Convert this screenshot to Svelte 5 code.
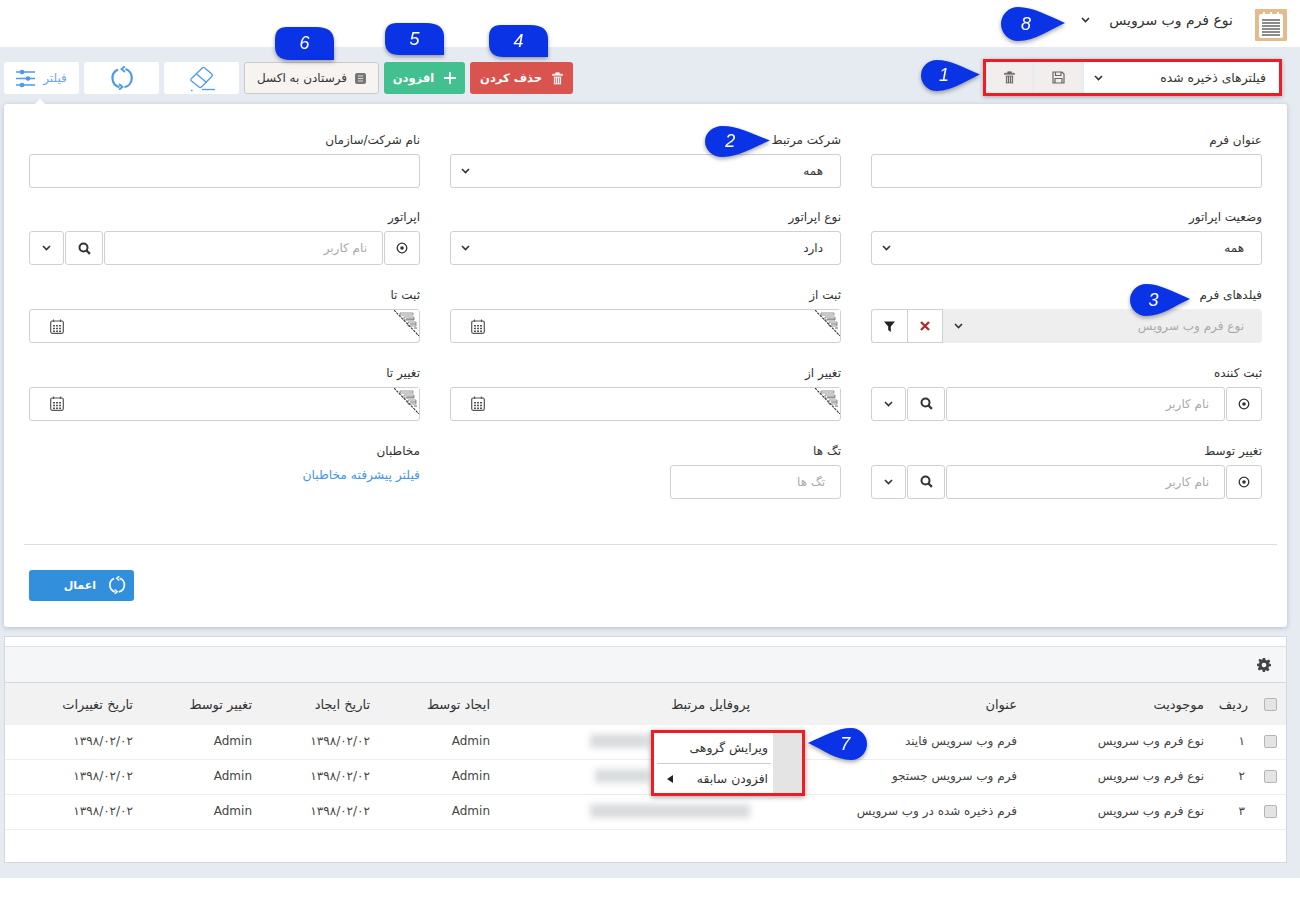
<script>
  const callouts = [
    { n: "1", x: 921, y: 60, w: 59, h: 31, kind: "right" },
    { n: "2", x: 705, y: 126, w: 65, h: 31, kind: "right" },
    { n: "3", x: 1130, y: 284, w: 60, h: 32, kind: "right" },
    { n: "4", x: 489, y: 25, w: 59, h: 32, kind: "box" },
    { n: "5", x: 385, y: 23, w: 59, h: 32, kind: "box" },
    { n: "6", x: 275, y: 27, w: 59, h: 33, kind: "box" },
    { n: "7", x: 808, y: 728, w: 59, h: 32, kind: "left" },
    { n: "8", x: 1001, y: 7, w: 64, h: 34, kind: "right" },
  ];

  const rows = [
    { id: "۱", title: "فرم وب سرویس فایند", blur: 60, blurRight: 100 },
    { id: "۲", title: "فرم وب سرویس جستجو", blur: 55, blurRight: 100 },
    { id: "۳", title: "فرم ذخیره شده در وب سرویس", blur: 160, blurRight: 0 },
  ];
</script>

{#snippet chevron()}
  <svg class="chev" width="9" height="6" viewBox="0 0 9 6"><path d="M1 1l3.500 3.500L8 1" fill="none" stroke="#333" stroke-width="1.600" /></svg>
{/snippet}

{#snippet select(text)}
  <div class="input select"><span>{text}</span>{@render chevron()}</div>
{/snippet}

{#snippet user()}
  <div class="group">
    <button class="addon radio" aria-label="انتخاب">
      <svg width="12" height="12" viewBox="0 0 12 12"><circle cx="6" cy="6" r="4.800" fill="none" stroke="#333" stroke-width="1.300" /><circle cx="6" cy="6" r="1.800" fill="#333" /></svg>
    </button>
    <div class="input grow ph">نام کاربر</div>
    <button class="addon search" aria-label="جستجو">
      <svg width="13" height="13" viewBox="0 0 13 13"><circle cx="5.500" cy="5.500" r="4" fill="none" stroke="#333" stroke-width="2" /><path d="M8.500 8.500l3.400 3.400" stroke="#333" stroke-width="2.200" /></svg>
    </button>
    <button class="addon drop" aria-label="باز کردن">{@render chevron()}</button>
  </div>
{/snippet}

{#snippet date()}
  <div class="input date">
    <svg class="corner" width="25" height="26" viewBox="0 0 25 26">
      <path d="M0 0H25V26Z" fill="#fff" />
      <path d="M6 3h13v2H6zM10 7h10v3h-10zM14 12h8v4h-8z" fill="none" stroke="#777" stroke-width="0.800" />
      <path d="M12 9h8M16 14h6M20 18h3" stroke="#666" stroke-width="1" />
      <path d="M0 0L25 26" stroke="#333" stroke-width="1.100" stroke-dasharray="2.500 1" />
    </svg>
    <svg class="cal" width="14" height="15" viewBox="0 0 14 15">
      <rect x="0.700" y="2" width="12.600" height="12.300" rx="1.500" fill="none" stroke="#555" stroke-width="1.200" />
      <path d="M3.500 0.500v2.500M10.500 0.500v2.500" stroke="#555" stroke-width="1.200" />
      <path d="M3 6h2v1.500H3zM6 6h2v1.500H6zM9 6h2v1.500H9zM3 8.800h2v1.500H3zM6 8.800h2v1.500H6zM9 8.800h2v1.500H9zM3 11.500h2V13H3zM6 11.500h2V13H6zM9 11.500h2V13H9z" fill="#555" />
    </svg>
  </div>
{/snippet}

{#snippet trash(color)}
  <svg width="11" height="13" viewBox="0 0 11 13"><path d="M0.500 2.200h10v1.300h-10zM3.700 2.200V0.700h3.600v1.500" fill={color} stroke={color} stroke-width="0.600" /><path d="M1.500 4.200h8V12a0.800 0.800 0 0 1-0.800 0.800H2.300A0.800 0.800 0 0 1 1.500 12zM3.400 5.500v6M5.500 5.500v6M7.600 5.500v6" fill={color} stroke={color === "#fff" ? "#d9534f" : "#f3eeee"} stroke-width="0.800" /></svg>
{/snippet}

{#snippet spin(color, size)}
  <svg width={size} height={size} viewBox="0 0 24 24" fill="none" stroke={color} stroke-width="2.200">
    <path d="M9.500 21.200A9.500 9.500 0 0 1 8 3.400" />
    <path d="M15.500 3A9.500 9.500 0 0 1 14.500 21.200" />
    <path d="M15 0.300L11.500 3l3.500 3M9 18l3.500 3-3.500 2.800" stroke-width="1.800" />
  </svg>
{/snippet}

<div class="page" dir="rtl">
  <header class="top">
    <div class="logo">
      <svg width="32" height="32" viewBox="0 0 32 32">
        <rect width="32" height="32" rx="1" fill="#e3bb8f" />
        <rect x="4" y="5" width="24" height="24" rx="2" fill="#fff" />
        <path d="M7 11h18M7 14h18M7 17h18M7 20h18M7 23h18M7 26h18" stroke="#666" stroke-width="1.500" />
        <path d="M9 3v4M16 3v4M23 3v4" stroke="#fff" stroke-width="2" />
      </svg>
    </div>
    <span class="title">نوع فرم وب سرویس</span>
    {@render chevron()}
  </header>

  <main class="content">
    <div class="toolbar">
      <div class="saved">
        <div class="saved-select"><span>فیلترهای ذخیره شده</span>{@render chevron()}</div>
        <button class="saved-btn" aria-label="ذخیره">
          <svg width="13" height="13" viewBox="0 0 13 13" fill="none" stroke="#666" stroke-width="1.200"><path d="M1 1h9l2 2v9H1z" /><path d="M3.500 1v3.500h5.500V1M3 12V7.500h7V12" /></svg>
        </button>
        <button class="saved-btn" aria-label="حذف">{@render trash("#666")}</button>
      </div>

      <div class="actions">
        <button class="btn red">{@render trash("#fff")}<span>حذف کردن</span></button>
        <button class="btn green">
          <svg width="12" height="12" viewBox="0 0 12 12"><path d="M6 0v12M0 6h12" stroke="#fff" stroke-width="1.800" /></svg>
          <span>افزودن</span>
        </button>
        <button class="btn excel">
          <svg width="11" height="11" viewBox="0 0 11 11"><rect width="11" height="11" rx="2" fill="#777" /><path d="M3 3h5M3 5.500h5M3 8h5" stroke="#ddd" stroke-width="1" /></svg>
          <span>فرستادن به اکسل</span>
        </button>
        <button class="tool" aria-label="پاک کردن">
          <svg width="28" height="27" viewBox="0 0 28 27" fill="none" stroke="#4b9be8" stroke-width="1.300">
            <path d="M3.500 13.500L14.500 2.800a1.500 1.500 0 0 1 2 0l7.500 6.500a1.500 1.500 0 0 1 0 2L13.500 22a2 2 0 0 1-2.500 0L3.500 16a1.500 1.500 0 0 1 0-2.500z" />
            <path d="M8.500 9l10 8.500" />
            <path d="M14 24.500h13" />
            <path d="M3 25.500h1.500" />
          </svg>
        </button>
        <button class="tool" aria-label="بازخوانی">{@render spin("#4b9be8", 24)}</button>
        <button class="tool filter">
          <span>فیلتر</span>
          <svg width="19" height="19" viewBox="0 0 19 19" stroke="#4b9be8" stroke-width="1.300" fill="#4b9be8">
            <path d="M0 3h19M0 9.500h19M0 16h19" />
            <circle cx="6" cy="3" r="1.700" /><circle cx="12" cy="9.500" r="1.700" /><circle cx="6" cy="16" r="1.700" />
          </svg>
        </button>
        <i class="caret"></i>
      </div>
    </div>

    <section class="panel">
      <div class="fields">
        <div class="field"><label>عنوان فرم</label><div class="input"></div></div>
        <div class="field"><label>شرکت مرتبط</label>{@render select("همه")}</div>
        <div class="field"><label>نام شرکت/سازمان</label><div class="input"></div></div>

        <div class="field"><label>وضعیت اپراتور</label>{@render select("همه")}</div>
        <div class="field"><label>نوع اپراتور</label>{@render select("دارد")}</div>
        <div class="field"><label>اپراتور</label>{@render user()}</div>

        <div class="field">
          <label>فیلدهای فرم</label>
          <div class="group tight">
            <div class="input grow disabled"><span>نوع فرم وب سرویس</span>{@render chevron()}</div>
            <button class="addon wide" aria-label="حذف">
              <svg width="10" height="10" viewBox="0 0 10 10"><path d="M1 1l8 8M9 1l-8 8" stroke="#a5322e" stroke-width="2.400" /></svg>
            </button>
            <button class="addon wide" aria-label="فیلتر">
              <svg width="11" height="11" viewBox="0 0 11 11"><path d="M0 0.500h11L6.800 5.500V11L4.200 9V5.500z" fill="#222" /></svg>
            </button>
          </div>
        </div>
        <div class="field"><label>ثبت از</label>{@render date()}</div>
        <div class="field"><label>ثبت تا</label>{@render date()}</div>

        <div class="field"><label>ثبت کننده</label>{@render user()}</div>
        <div class="field"><label>تغییر از</label>{@render date()}</div>
        <div class="field"><label>تغییر تا</label>{@render date()}</div>

        <div class="field"><label>تغییر توسط</label>{@render user()}</div>
        <div class="field"><label>تگ ها</label><div class="input ph tags">تگ ها</div></div>
        <div class="field">
          <label>مخاطبان</label>
          <a class="link" href="#contacts">فیلتر پیشرفته مخاطبان</a>
        </div>
      </div>

      <hr />

      <div class="apply-row">
        <button class="apply">{@render spin("#fff", 18)}<span>اعمال</span></button>
      </div>
    </section>

    <section class="grid">
      <div class="grid-tools">
        <svg width="14" height="14" viewBox="0 0 24 24"><path fill="#444" d="M10 0h4l.7 3.400 2.300 1 3-1.900 2.800 2.800-1.900 3 1 2.300L24 10v4l-3.400.7-1 2.300 1.900 3-2.800 2.800-3-1.900-2.300 1L14 24h-4l-.7-3.400-2.300-1-3 1.900-2.800-2.800 1.900-3-1-2.300L0 14v-4l3.400-.7 1-2.300-1.900-3L4.300 1.200l3 1.900 2.300-1zM12 8a4 4 0 1 0 0 8 4 4 0 0 0 0-8z" /></svg>
      </div>
      <table>
        <colgroup>
          <col style="width: 38px" /><col style="width: 44px" /><col style="width: 187px" /><col style="width: 267px" />
          <col style="width: 260px" /><col style="width: 120px" /><col style="width: 118px" /><col style="width: 119px" /><col />
        </colgroup>
        <thead>
          <tr>
            <th><i class="check"></i></th>
            <th>ردیف</th><th>موجودیت</th><th>عنوان</th><th>پروفایل مرتبط</th>
            <th>ایجاد توسط</th><th>تاریخ ایجاد</th><th>تغییر توسط</th><th>تاریخ تغییرات</th>
          </tr>
        </thead>
        <tbody>
          {#each rows as row}
            <tr>
              <td><i class="check"></i></td>
              <td class="num">{row.id}</td>
              <td>نوع فرم وب سرویس</td>
              <td>{row.title}</td>
              <td><div class="blurred" style="width: {row.blur}px; margin-right: {row.blurRight}px"></div></td>
              <td>Admin</td>
              <td>۱۳۹۸/۰۲/۰۲</td>
              <td>Admin</td>
              <td>۱۳۹۸/۰۲/۰۲</td>
            </tr>
          {/each}
        </tbody>
      </table>
    </section>
  </main>

  <div class="menu">
    <div class="menu-gutter"></div>
    <div class="menu-items">
      <div class="menu-item">ویرایش گروهی</div>
      <div class="menu-item sep">افزودن سابقه<i class="arrow"></i></div>
    </div>
  </div>

  {#each callouts as c}
    <div class="callout" dir="ltr" style="left: {c.x}px; top: {c.y}px; width: {c.w}px; height: {c.h}px">
      <svg class:flip={c.kind === "left"} width={c.w} height={c.h} viewBox="0 0 60 32" preserveAspectRatio="none">
        {#if c.kind === "box"}
          <path d="M12 0H42Q60 0 60 14V32H15Q0 32 0 19V12Q0 0 12 0Z" fill="#0a33e6" />
        {:else}
          <path d="M16 0C30 0 44 8 60 15C44 22 32 32 16 32A16 16 0 0 1 16 0Z" fill="#0a33e6" />
        {/if}
      </svg>
      <span class:center={c.kind === "box"} class:mid={c.kind === "left"}>{c.n}</span>
    </div>
  {/each}
</div>

<style>
  :global(body) {
    background: #fff;
  }

  .page {
    position: relative;
    width: 1300px;
    height: 897px;
    overflow: hidden;
    font-family: "DejaVu Sans", "Liberation Sans", sans-serif;
    font-size: 12px;
    color: #333;
  }

  button {
    font-family: inherit;
    font-size: inherit;
    cursor: pointer;
  }

  .top {
    height: 47px;
    display: flex;
    align-items: center;
    padding-right: 13px;
    box-sizing: border-box;
  }
  .logo {
    height: 32px;
    margin-top: 3px;
  }
  .title {
    margin-right: 22px;
    font-size: 14px;
    margin-top: -8px;
  }
  .top .chev {
    margin-right: 19px;
    margin-top: -8px;
  }

  .content {
    background: #e6ebf2;
    padding: 0 13px 15px 4px;
    height: 831px;
    box-sizing: border-box;
  }

  .toolbar {
    height: 57px;
    display: flex;
    justify-content: space-between;
    align-items: flex-start;
    margin-right: -8px;
    padding-right: 13px;
    padding-top: 12px;
    box-sizing: border-box;
  }

  .saved {
    display: flex;
    width: 299px;
    height: 37px;
    box-sizing: border-box;
    border: 3px solid #ee1c25;
    gap: 3px;
    background: #e9edf2;
    box-shadow: 0 1px 4px rgba(0, 0, 0, 0.3);
  }
  .saved-select {
    flex: 1;
    background: #fff;
    display: flex;
    justify-content: space-between;
    align-items: center;
    padding: 0 13px 0 10px;
    font-size: 12.400px;
  }
  .saved-btn {
    width: 46px;
    border: 0;
    background: #f3eeee;
    display: flex;
    align-items: center;
    justify-content: center;
  }

  .actions {
    position: relative;
    display: flex;
    gap: 5px;
    margin-top: 3px;
  }
  .btn,
  .tool {
    height: 32px;
    border-radius: 3px;
    border: 0;
    display: flex;
    align-items: center;
    justify-content: center;
    gap: 10px;
    padding: 0;
    box-sizing: border-box;
  }
  .btn.red {
    width: 103px;
    background: #d9534f;
    color: #fff;
    font-weight: bold;
    font-size: 11.500px;
  }
  .btn.green {
    width: 81px;
    background: #43c08f;
    color: #fff;
    font-weight: bold;
    font-size: 11.500px;
  }
  .btn.excel {
    width: 135px;
    background: #f6f3f1;
    border: 1px solid #c9c9c9;
    color: #333;
    gap: 8px;
  }
  .tool {
    width: 75px;
    background: #fff;
  }
  .tool.filter {
    color: #6da9e8;
    gap: 8px;
    flex-direction: row;
  }
  .caret {
    position: absolute;
    left: 30px;
    bottom: -11px;
    border: 6px solid transparent;
    border-top: 0;
    border-bottom: 6px solid #fff;
  }

  .panel {
    height: 523px;
    background: #fff;
    border-radius: 3px;
    box-shadow: 0 1px 5px rgba(90, 105, 125, 0.35);
    padding-top: 26.600px;
    box-sizing: border-box;
  }
  .fields {
    display: grid;
    grid-template-columns: repeat(3, 391px);
    column-gap: 30px;
    row-gap: 20.750px;
    padding: 0 25px;
  }
  label {
    display: block;
    height: 20px;
    line-height: 18px;
    margin-bottom: 3px;
    font-size: 12px;
  }
  .input {
    height: 34px;
    box-sizing: border-box;
    border: 1px solid #d0d0d0;
    border-radius: 3px;
    background: #fff;
    display: flex;
    align-items: center;
    padding: 0 15px;
  }
  .select,
  .disabled {
    justify-content: space-between;
    padding: 0 17px 0 10px;
  }
  .ph {
    color: #aaa;
  }
  .tags {
    width: 171px;
    box-sizing: border-box;
  }
  .group {
    display: flex;
    gap: 1px;
  }
  .group.tight {
    gap: 0;
  }
  .grow {
    flex: 1;
    min-width: 0;
  }
  .addon {
    height: 34px;
    background: #fff;
    border: 1px solid #d0d0d0;
    border-radius: 3px;
    padding: 0;
    display: flex;
    align-items: center;
    justify-content: center;
    box-sizing: border-box;
  }
  .radio {
    width: 36px;
  }
  .search {
    width: 38px;
  }
  .drop {
    width: 35px;
  }
  .wide {
    width: 36px;
    border-radius: 0;
  }
  .wide:last-child {
    border-right: 0;
    border-radius: 3px 0 0 3px;
  }
  .disabled {
    background: #eee;
    border-color: #eee;
    color: #aaa;
    border-radius: 0 3px 3px 0;
  }
  .date {
    position: relative;
    justify-content: flex-end;
    padding: 0 20px;
  }
  .corner {
    position: absolute;
    top: 0;
    right: 0;
  }
  .link {
    color: #3f97e6;
    text-decoration: none;
    display: block;
    line-height: 20px;
    font-size: 12.300px;
  }

  hr {
    border: 0;
    border-top: 1px solid #ddd;
    margin: 45px 10px 0 20px;
  }
  .apply-row {
    display: flex;
    justify-content: flex-end;
    padding: 25px 25px 0;
  }
  .apply {
    width: 105px;
    height: 31px;
    background: #328fdc;
    color: #fff;
    border: 0;
    border-radius: 3px;
    display: flex;
    align-items: center;
    justify-content: flex-start;
    padding: 0 8px 0 0;
    gap: 12px;
    font-weight: bold;
    font-size: 11px;
  }

  .grid {
    margin-top: 9px;
    height: 227px;
    background: #fff;
    border: 1px solid #d3d8de;
    box-sizing: border-box;
    padding-top: 9px;
  }
  .grid-tools {
    height: 37px;
    background: #f4f6f8;
    border-top: 1px solid #dde1e5;
    border-bottom: 1px solid #d3d8de;
    box-sizing: border-box;
    display: flex;
    align-items: center;
    padding-right: 15px;
  }
  table {
    width: 100%;
    table-layout: fixed;
    border-collapse: separate;
    border-spacing: 0;
  }
  th {
    background: #f2f2f2;
    height: 42px;
    padding: 0;
    text-align: right;
    font-weight: normal;
    font-size: 13px;
    color: #333;
  }
  td {
    height: 35px;
    padding: 0 0 2px;
    border-bottom: 1px solid #eee;
    text-align: right;
    color: #444;
    box-sizing: border-box;
    font-size: 12px;
  }
  .num {
    padding-right: 3px;
  }
  .check {
    display: block;
    width: 13px;
    height: 13px;
    box-sizing: border-box;
    margin-right: 9px;
    background: #e4e4e4;
    border: 1px solid #b5b5b5;
    border-radius: 2px;
  }
  .blurred {
    height: 14px;
    background: #c9cdd0;
    filter: blur(3px);
    opacity: 0.7;
  }

  .menu {
    position: absolute;
    left: 651px;
    top: 730px;
    width: 154px;
    height: 66px;
    box-sizing: border-box;
    border: 3px solid #ee1c25;
    background: #fff;
    box-shadow: 0 1px 5px rgba(0, 0, 0, 0.4);
    display: flex;
  }
  .menu-gutter {
    width: 29px;
    background: #e4e4e4;
  }
  .menu-items {
    flex: 1;
    padding: 0 2px 0 3px;
    font-size: 12.400px;
  }
  .menu-item {
    position: relative;
    height: 30px;
    line-height: 30px;
    color: #333;
    padding-right: 3px;
  }
  .sep {
    border-top: 1px solid #ccc;
  }
  .arrow {
    position: absolute;
    left: 10px;
    top: 11px;
    border: 4px solid transparent;
    border-left: 0;
    border-right: 6px solid #222;
  }

  .callout {
    position: absolute;
    filter: drop-shadow(0 2px 2px rgba(0, 0, 0, 0.35));
  }
  .callout svg {
    display: block;
  }
  .flip {
    transform: scaleX(-1);
  }
  .callout span {
    position: absolute;
    left: 0;
    width: 78%;
    top: 0;
    height: 100%;
    display: flex;
    align-items: center;
    justify-content: center;
    color: #fff;
    font-family: "Liberation Sans", Arial, sans-serif;
    font-style: italic;
    font-size: 18px;
  }
  .callout span.center {
    width: 100%;
  }
  .callout span.mid {
    left: 33%;
    width: 60%;
  }
</style>
